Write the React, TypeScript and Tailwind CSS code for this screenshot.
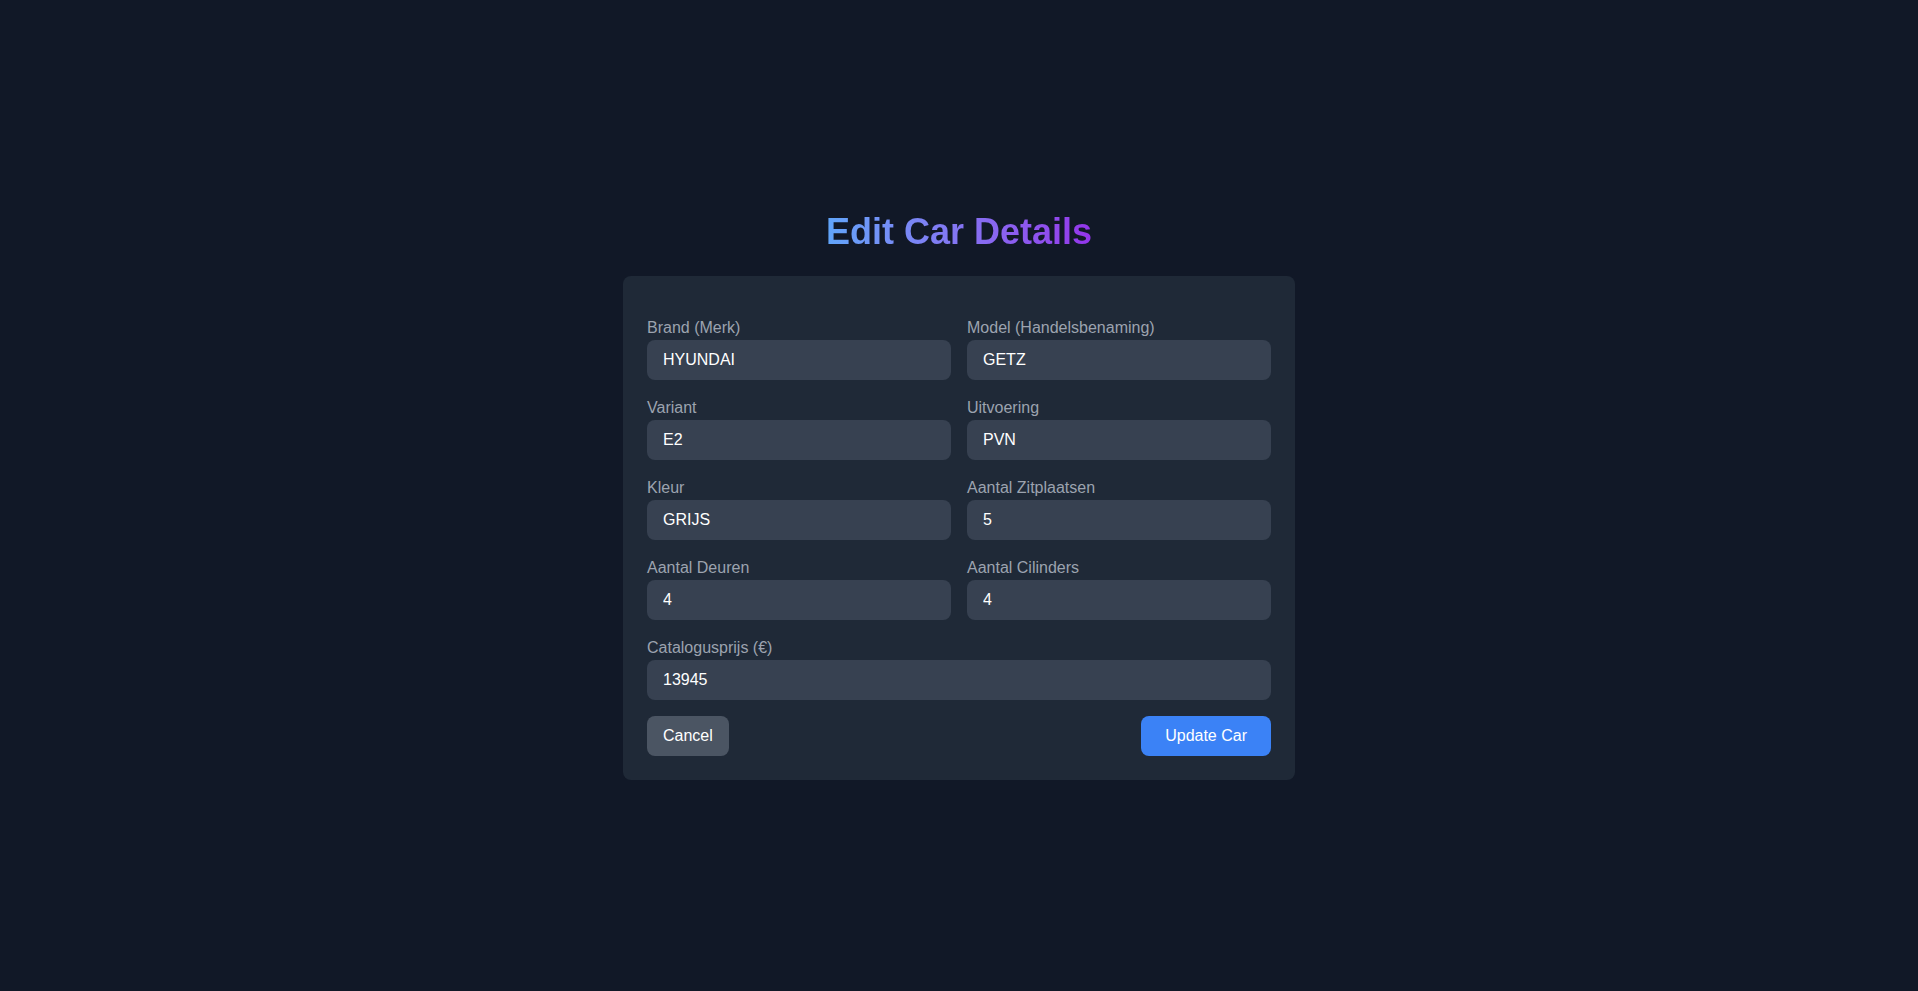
import { useState } from 'react';

interface FieldDef {
  key: string;
  label: string;
  full?: boolean;
}

const fields: FieldDef[] = [
  { key: 'merk', label: 'Brand (Merk)' },
  { key: 'handelsbenaming', label: 'Model (Handelsbenaming)' },
  { key: 'variant', label: 'Variant' },
  { key: 'uitvoering', label: 'Uitvoering' },
  { key: 'kleur', label: 'Kleur' },
  { key: 'zitplaatsen', label: 'Aantal Zitplaatsen' },
  { key: 'deuren', label: 'Aantal Deuren' },
  { key: 'cilinders', label: 'Aantal Cilinders' },
  { key: 'prijs', label: 'Catalogusprijs (€)', full: true },
];

export default function App() {
  const [car, setCar] = useState<Record<string, string>>({
    merk: 'HYUNDAI',
    handelsbenaming: 'GETZ',
    variant: 'E2',
    uitvoering: 'PVN',
    kleur: 'GRIJS',
    zitplaatsen: '5',
    deuren: '4',
    cilinders: '4',
    prijs: '13945',
  });

  return (
    <div className="min-h-screen bg-[#111827] flex flex-col items-center justify-center font-['Liberation_Sans',Arial,sans-serif]">
      <h1 className="text-4xl font-bold mb-6 bg-gradient-to-r from-[#60a5fa] to-[#9333ea] bg-clip-text text-transparent">
        Edit Car Details
      </h1>
      <form
        onSubmit={(e) => e.preventDefault()}
        className="w-[672px] bg-[#1f2937] rounded-lg px-6 pt-10 pb-6"
      >
        <div className="grid grid-cols-2 gap-4">
          {fields.map((f) => (
            <div key={f.key} className={f.full ? 'col-span-2' : ''}>
              <label className="block text-base text-[#9ca3af]">{f.label}</label>
              <input
                type="text"
                value={car[f.key]}
                onChange={(e) => setCar({ ...car, [f.key]: e.target.value })}
                className="w-full h-10 px-4 py-2 rounded-lg bg-[#374151] text-white text-base focus:outline-none"
              />
            </div>
          ))}
        </div>
        <div className="flex justify-between mt-4">
          <button type="button" className="h-10 px-4 rounded-lg bg-[#4b5563] text-white text-base">
            Cancel
          </button>
          <button type="submit" className="h-10 px-6 rounded-lg bg-[#3b82f6] text-white text-base">
            Update Car
          </button>
        </div>
      </form>
    </div>
  );
}
